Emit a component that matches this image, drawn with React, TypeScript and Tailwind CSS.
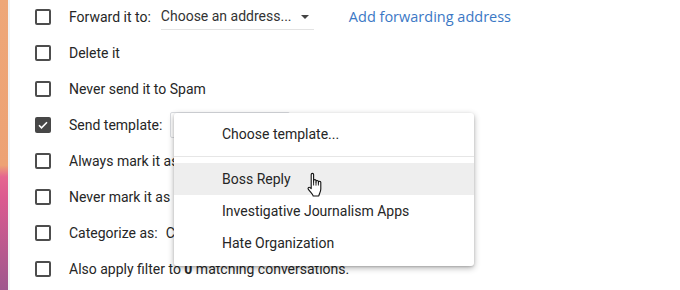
import React from "react";

function Box({ checked = false }: { checked?: boolean }) {
  if (checked) {
    return (
      <div className="w-4 h-4 rounded-[2px] bg-[#474747] flex items-center justify-center shrink-0">
        <svg width="12" height="12" viewBox="0 0 24 24">
          <path d="M4 12.5l5 5L20 6.5" fill="none" stroke="#fff" strokeWidth="3.2" />
        </svg>
      </div>
    );
  }
  return <div className="w-4 h-4 rounded-[2px] border-2 border-[#4d4d4d] shrink-0" />;
}

function Row({ checked, children }: { checked?: boolean; children: React.ReactNode }) {
  return (
    <div className="h-9 flex items-center">
      <div className="w-[69px] pl-[35px] flex items-center">
        <Box checked={checked} />
      </div>
      <div className="flex items-center text-[14px] text-[#262626] whitespace-nowrap">{children}</div>
    </div>
  );
}

export default function App() {
  return (
    <div
      className="relative w-[680px] h-[290px] overflow-hidden bg-white flex"
      style={{ fontFamily: "Roboto, 'Liberation Sans', sans-serif" }}
    >
      <div className="w-[8px] h-full bg-[linear-gradient(180deg,#eea778_0%,#eda274_57%,#e56590_61%,#dc5a90_68%,#b5598e_88%,#9f578e_100%)]" />
      <div className="w-[2px] h-full bg-[#f1f3f4]" />
      <div className="flex-1 relative">
        <div className="flex flex-col -mt-[1px] -ml-[10px]">
          <Row>
            <span>Forward it to:</span>
            <div className="ml-[10px] w-[153px] h-[26px] border-b border-[#e3e3e3] flex items-center justify-between pr-[5px]">
              <span className="text-[#333]">Choose an address...</span>
              <svg width="8" height="4" viewBox="0 0 8 4" className="mt-[1px]">
                <path d="M0 0h8L4 4z" fill="#444" />
              </svg>
            </div>
            <span
              className="ml-[35px] text-[#3b78c5] font-medium text-[14.5px]"
              style={{ fontFamily: "'Open Sans', Roboto, sans-serif" }}
            >
              Add forwarding address
            </span>
          </Row>
          <Row>Delete it</Row>
          <Row>Never send it to Spam</Row>
          <Row checked>
            <span>Send template:</span>
            <div className="ml-[8px] w-[120px] h-[26px] border border-[#dadce0] rounded-[2px]" />
          </Row>
          <Row>Always mark it as read</Row>
          <Row>Never mark it as important</Row>
          <Row>
            <span>Categorize as:</span>
            <span className="ml-[8px]">Choose category...</span>
          </Row>
          <Row>
            <span>
              Also apply filter to <b className="font-bold">0</b> matching conversations.
            </span>
          </Row>
        </div>

        <div className="absolute left-[164px] top-[113px] w-[300px] h-[153px] bg-white rounded-[3px] shadow-[0_2px_6px_rgba(0,0,0,0.3),0_1px_2px_rgba(0,0,0,0.15)] pt-[5px] text-[14px] text-[#262626]">
          <div className="h-8 flex items-center pl-[48px]">Choose template...</div>
          <div className="my-[6px] h-px bg-[#e6e6e6]" />
          <div className="h-8 flex items-center pl-[48px] bg-[#eeeeee]">Boss Reply</div>
          <div className="h-8 flex items-center pl-[48px]">Investigative Journalism Apps</div>
          <div className="h-8 flex items-center pl-[48px]">Hate Organization</div>
        </div>

        <svg
          className="absolute left-[295px] top-[172px]"
          width="20"
          height="25"
          viewBox="0 0 20 25"
        >
          <path
            d="M6.2 14V2.4c0-1.4 2.4-1.4 2.4 0V10V8.6c0-1.3 2.4-1.3 2.4 0V10.6V9.4c0-1.3 2.4-1.3 2.4 0V11V10.2c0-1.3 2.4-1.3 2.4 0V17c0 3-1.6 4.6-2 7H8.2c-.6-2-2.6-3.6-4.8-6.6c-1-1.4.4-2.8 1.6-1.8L6.2 16.6z"
            fill="#fff"
            stroke="#111"
            strokeWidth="1.1"
            strokeLinejoin="round"
          />
          <path d="M8.6 10v3.5M11 10.6v3M13.4 11v2.5" stroke="#111" strokeWidth="0.9" />
        </svg>
      </div>
    </div>
  );
}
